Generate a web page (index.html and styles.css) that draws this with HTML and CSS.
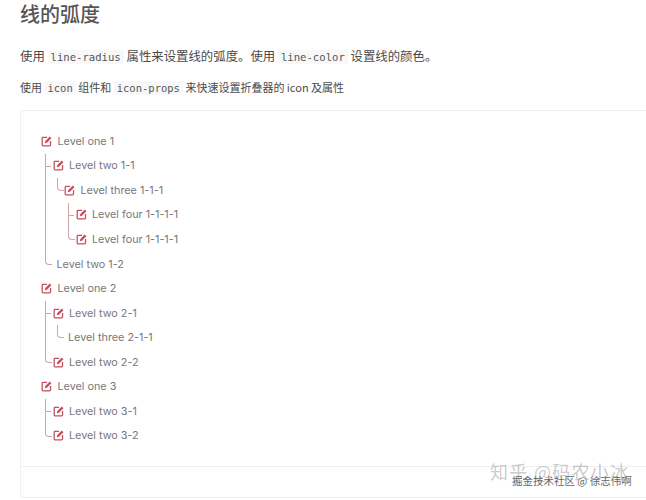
FILE: index.html
```html
<!DOCTYPE html>
<html lang="zh-CN">
<head>
    <meta charset="UTF-8">
    <meta name="viewport" content="width=device-width, initial-scale=1.0">
    <title>线的弧度</title>
    <link rel="stylesheet" href="styles.css">
</head>
<body>
    <svg class="sprite" aria-hidden="true">
        <symbol id="edit" viewBox="0 0 12 12">
            <path d="M6.6 1.6H2.2a.9.9 0 0 0-.9.9v7.3c0 .5.4.9.9.9h7.3c.5 0 .9-.4.9-.9V5.4" fill="none" stroke="currentColor" stroke-width="1.4"/>
            <path d="M9.6.6l1.8 1.8-4.9 4.9-2.4.6.6-2.4z" fill="currentColor"/>
        </symbol>
    </svg>
    <div class="page">
        <h3 class="title">线的弧度</h3>
        <p class="intro">使用 <code>line-radius</code> 属性来设置线的弧度。使用 <code>line-color</code> 设置线的颜色。</p>
        <p class="intro small">使用 <code>icon</code> 组件和 <code>icon-props</code> 来快速设置折叠器的 icon 及属性</p>

        <div class="card">
            <div class="demo">
                <ul class="tree">
                    <li>
                        <div class="row"><svg class="icon"><use href="#edit"/></svg>Level one 1</div>
                        <ul>
                            <li>
                                <div class="row"><svg class="icon"><use href="#edit"/></svg>Level two 1-1</div>
                                <ul>
                                    <li>
                                        <div class="row"><svg class="icon"><use href="#edit"/></svg>Level three 1-1-1</div>
                                        <ul>
                                            <li><div class="row"><svg class="icon"><use href="#edit"/></svg>Level four 1-1-1-1</div></li>
                                            <li><div class="row"><svg class="icon"><use href="#edit"/></svg>Level four 1-1-1-1</div></li>
                                        </ul>
                                    </li>
                                </ul>
                            </li>
                            <li><div class="row plain">Level two 1-2</div></li>
                        </ul>
                    </li>
                    <li>
                        <div class="row"><svg class="icon"><use href="#edit"/></svg>Level one 2</div>
                        <ul>
                            <li>
                                <div class="row"><svg class="icon"><use href="#edit"/></svg>Level two 2-1</div>
                                <ul>
                                    <li><div class="row plain">Level three 2-1-1</div></li>
                                </ul>
                            </li>
                            <li><div class="row"><svg class="icon"><use href="#edit"/></svg>Level two 2-2</div></li>
                        </ul>
                    </li>
                    <li>
                        <div class="row"><svg class="icon"><use href="#edit"/></svg>Level one 3</div>
                        <ul>
                            <li><div class="row"><svg class="icon"><use href="#edit"/></svg>Level two 3-1</div></li>
                            <li><div class="row"><svg class="icon"><use href="#edit"/></svg>Level two 3-2</div></li>
                        </ul>
                    </li>
                </ul>
            </div>
            <div class="card-footer"></div>
        </div>

        <div class="mark-zhihu">知乎 @码农小冰</div>
        <div class="mark-juejin">掘金技术社区 @ 徐志伟啊</div>
    </div>
</body>
</html>
```

FILE: styles.css
```css
body {
    margin: 0;
    background-color: #fff;
    font-family: "Noto Sans CJK SC", sans-serif;
    color: #4a4a4a;
}
.sprite {
    display: none;
}
.page {
    position: relative;
    height: 500px;
    padding-left: 20px;
    overflow: hidden;
}
.title {
    margin: 0;
    height: 28px;
    line-height: 28px;
    font-size: 20px;
    font-weight: 500;
    color: #555;
}
.intro {
    margin: 18px 0 0;
    height: 20px;
    line-height: 20px;
    font-size: 12.4px;
    white-space: nowrap;
    color: #4a4a4a;
}
.intro.small {
    margin-top: 11px;
    font-size: 11px;
}
code {
    font-family: "DejaVu Sans Mono", monospace;
    font-size: 10.6px;
    padding: 1px 3px;
    border-radius: 2px;
    background-color: #f8f8f9;
    color: #555;
}
.small code {
    font-size: 10.5px;
}

/* card runs past the right edge of the window */
.card {
    width: 700px;
    height: 388px;
    margin-top: 13px;
    box-sizing: border-box;
    border: 1px solid #f0f0f0;
    border-radius: 3px;
    display: flex;
    flex-direction: column;
}
.demo {
    height: 356px;
    box-sizing: border-box;
    padding: 18px 0 0 20px;
    border-bottom: 1px solid #f0f0f0;
}

.tree, .tree ul {
    list-style: none;
    margin: 0;
    padding: 0;
}
.tree ul {
    margin-left: 4px;
}
.tree ul li {
    position: relative;
    padding-left: 7.5px;
}
/* branch line down the whole item */
.tree ul li::after {
    content: "";
    position: absolute;
    left: 0;
    top: 0;
    bottom: 0;
    border-left: 1px solid #cfa3a8;
}
/* tick to the row */
.tree ul li::before {
    content: "";
    position: absolute;
    left: 0;
    top: 0;
    width: 6px;
    height: 12px;
    border-bottom: 1px solid #cfa3a8;
}
.tree ul li:last-child::after {
    display: none;
}
.tree ul li:last-child::before {
    border-left: 1px solid #cfa3a8;
    border-bottom-left-radius: 4px;
}
.row {
    display: flex;
    align-items: center;
    gap: 5.5px;
    height: 24.55px;
    font-family: Inter, sans-serif;
    font-size: 10.8px;
    color: #77777c;
    white-space: nowrap;
}
.row.plain {
    padding-left: 4px;
}
.icon {
    width: 11px;
    height: 11px;
    flex: none;
    color: #c4505f;
}

/* image watermarks */
.mark-zhihu {
    position: absolute;
    left: 490px;
    top: 459px;
    font-size: 18px;
    line-height: 24px;
    letter-spacing: 1.3px;
    color: rgba(120, 120, 120, 0.4);
    white-space: nowrap;
}
.mark-juejin {
    position: absolute;
    left: 512px;
    top: 474px;
    font-size: 10.5px;
    line-height: 14px;
    color: #666;
    white-space: nowrap;
}
```
